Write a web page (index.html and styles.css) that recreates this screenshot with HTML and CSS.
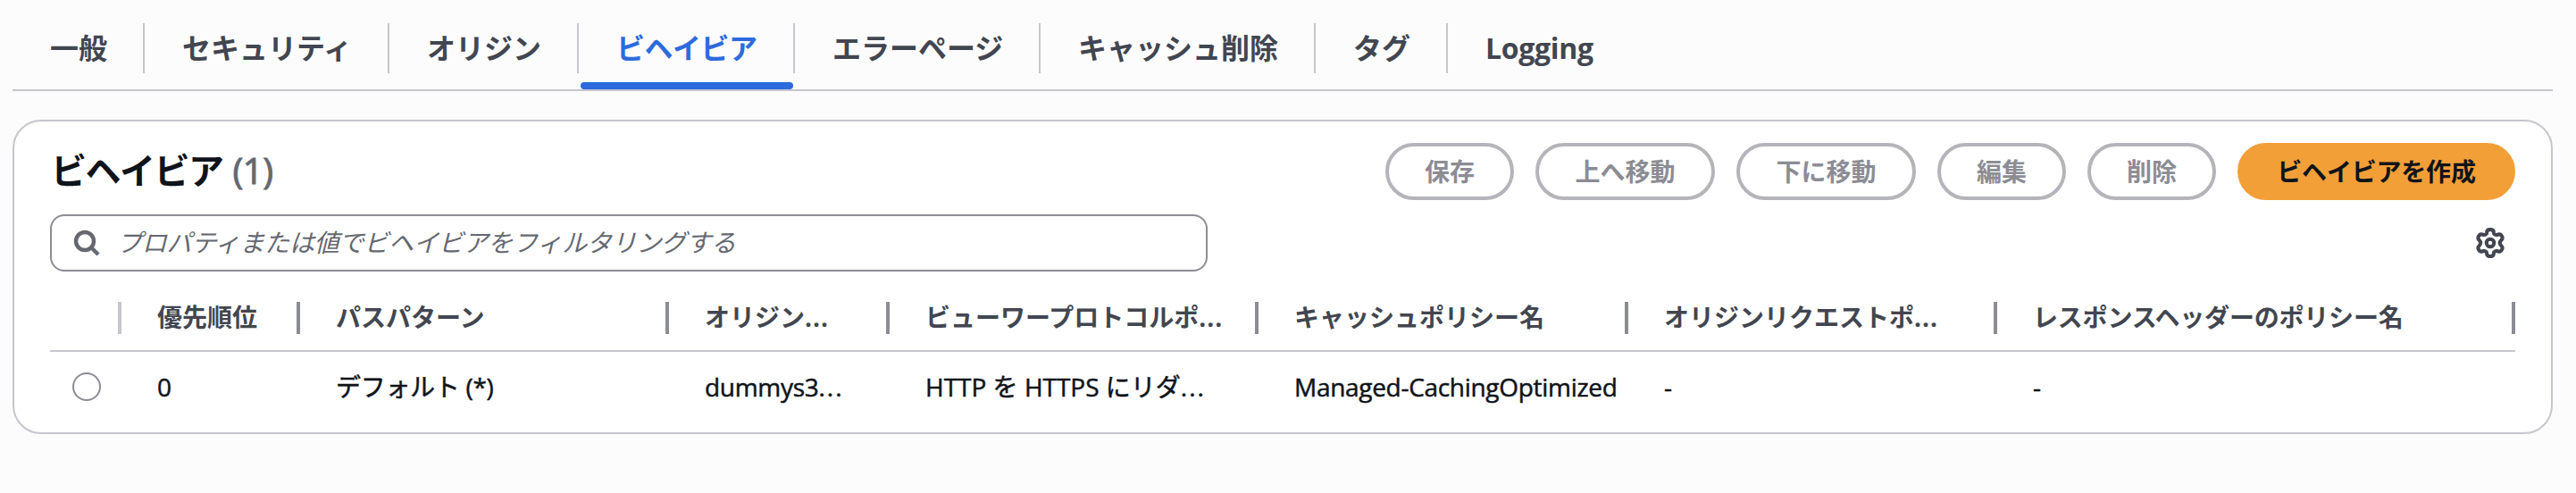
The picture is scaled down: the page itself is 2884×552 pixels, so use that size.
FILE: index.html
```html
<!DOCTYPE html>
<html lang="ja">
<head>
<meta charset="utf-8">
<title>ビヘイビア</title>
<link rel="stylesheet" href="styles.css">
</head>
<body>
<nav class="tabs">
<a class="tab t1"><span>一般</span></a>
<a class="tab t2"><span>セキュリティ</span></a>
<a class="tab t3"><span>オリジン</span></a>
<a class="tab t4 active"><span>ビヘイビア</span></a>
<a class="tab t5"><span>エラーページ</span></a>
<a class="tab t6"><span>キャッシュ削除</span></a>
<a class="tab t7"><span>タグ</span></a>
<a class="tab t8"><span>Logging</span></a>
</nav>
<section class="card">
<header class="head">
<h2 class="title"><span class="name">ビヘイビア</span><span class="count">(1)</span></h2>
<div class="actions">
<button class="btn b2" disabled>保存</button>
<button class="btn b4" disabled>上へ移動</button>
<button class="btn b4" disabled>下に移動</button>
<button class="btn b2" disabled>編集</button>
<button class="btn b2" disabled>削除</button>
<button class="btn primary">ビヘイビアを作成</button>
</div>
</header>
<div class="tools">
<label class="search">
<svg class="search-icon" viewBox="0 0 32 32"><circle cx="14" cy="14" r="10"/><path d="m29 29-8-8"/></svg>
<span class="placeholder">プロパティまたは値でビヘイビアをフィルタリングする</span>
</label>
<svg class="gear" viewBox="0 0 32 32"><path d="M16 1.800c2.300 0 3.500 1.100 3.700 3.200l.2 1.300c.9 1 2 1.500 3.200 1.200l1.200-.4c1.800-.5 3.100.1 4 1.900.9 1.700.6 3-.8 4.200-1.800 1.800-1.800 3.800 0 5.600 1.400 1.200 1.700 2.500.8 4.200-.9 1.800-2.200 2.400-4 1.900l-1.200-.4c-1.200-.3-2.300.2-3.200 1.200l-.2 1.300c-.2 2.100-1.400 3.200-3.700 3.200s-3.500-1.100-3.700-3.200l-.2-1.300c-.9-1-2-1.500-3.200-1.200l-1.200.4c-1.800.5-3.100-.1-4-1.900-.9-1.700-.6-3 .8-4.200 1.800-1.800 1.800-3.800 0-5.600C3.100 12 2.800 10.700 3.700 9c.9-1.800 2.200-2.400 4-1.900l1.200.4c1.200.3 2.300-.2 3.200-1.200l.2-1.300c.2-2.100 1.400-3.200 3.700-3.200Z"/><circle cx="16" cy="16" r="4"/></svg>
</div>
<div class="row header-row">
<div class="cell light"></div>
<div class="cell">優先順位</div>
<div class="cell">パスパターン</div>
<div class="cell">オリジン<span class="dots">...</span></div>
<div class="cell">ビューワープロトコルポ<span class="dots">...</span></div>
<div class="cell">キャッシュポリシー名</div>
<div class="cell">オリジンリクエストポ<span class="dots">...</span></div>
<div class="cell last">レスポンスヘッダーのポリシー名</div>
</div>
<div class="row data-row">
<div class="cell pick"><span class="radio"></span></div>
<div class="cell">0</div>
<div class="cell latin">デフォルト (*)</div>
<div class="cell latin">dummys3<span class="dots wide">...</span></div>
<div class="cell">HTTP を HTTPS にリダ<span class="dots wide">...</span></div>
<div class="cell managed">Managed-CachingOptimized</div>
<div class="cell">-</div>
<div class="cell">-</div>
</div>
</section>
</body>
</html>
```

FILE: styles.css
```css
* { box-sizing: border-box; }
body {
  margin: 0;
  height: 552px;
  padding: 26px 26px 0 14px;
  background: #fcfcfd;
  color: #0f141a;
  font-family: "Open Sans", "Noto Sans CJK JP", sans-serif;
  font-size: 28px;
}
.tabs {
  display: flex;
  height: 76px;
  border-bottom: 2px solid #c6c6cd;
  color: #424650;
  font-size: 32px;
  font-weight: 700;
}
.tab {
  display: flex;
  flex-direction: column;
  justify-content: space-between;
  height: 74px;
  white-space: nowrap;
}
.tab span {
  display: block;
  height: 56px;
  line-height: 56px;
  padding-left: 42px;
  border-right: 2px solid #c6c6cd;
}
.t1 { width: 148px; }
.t2 { width: 274px; }
.t3 { width: 212px; }
.t4 { width: 242px; }
.t5 { width: 275px; }
.t6 { width: 308px; }
.t7 { width: 148px; }
.t8 span { border: 0; letter-spacing: -0.300px; }
.active { color: #2d6bdc; }
.active span { letter-spacing: -0.500px; }
.active::after {
  content: "";
  height: 8px;
  margin: 0 2px;
  border-radius: 4px;
  background: #2d6bdc;
}
.card {
  margin-top: 32px;
  height: 352px;
  padding: 24px 40px 0;
  border: 2px solid #c6c6cd;
  border-radius: 32px;
  background: #fff;
}
.head {
  display: flex;
  justify-content: space-between;
  height: 64px;
}
.title {
  display: flex;
  gap: 11px;
  margin: 0;
  padding-left: 1px;
  font-size: 40px;
  line-height: 62px;
  font-weight: 700;
}
.name { letter-spacing: -1.500px; }
.count {
  color: #656871;
  font-weight: 400;
  letter-spacing: -0.500px;
  -webkit-text-stroke: 1px #656871;
}
.actions { display: flex; gap: 24px; }
.btn {
  height: 64px;
  padding: 0;
  border: 4px solid #b4b4bb;
  border-radius: 32px;
  background: #fff;
  color: #8c8c94;
  font: 700 28px/54px "Open Sans", "Noto Sans CJK JP", sans-serif;
}
.b2 { width: 144px; }
.b4 { width: 201px; }
.primary {
  width: 311px;
  border-color: #f29f38;
  background: #f29f38;
  color: #0f141a;
  letter-spacing: -0.200px;
}
.tools {
  display: flex;
  align-items: center;
  justify-content: space-between;
  margin-top: 16px;
  height: 64px;
}
.search {
  display: flex;
  align-items: center;
  gap: 18px;
  width: 1296px;
  height: 64px;
  padding-left: 23px;
  border: 2px solid #8c8c94;
  border-radius: 16px;
}
.search-icon { width: 32px; height: 32px; fill: none; stroke: #656871; stroke-width: 4.400; }
.placeholder {
  height: 60px;
  color: #656871;
  font-style: italic;
  letter-spacing: -0.200px;
  line-height: 59px;
  white-space: nowrap;
}
.gear {
  width: 34px;
  height: 34px;
  margin-right: 11px;
  fill: none;
  stroke: #424650;
  stroke-width: 3.800;
}
.row {
  display: grid;
  grid-template-columns: 80px 200px 413px 247px 413px 414px 413px 580px;
  white-space: nowrap;
}
.header-row {
  margin-top: 16px;
  height: 74px;
  padding-top: 18px;
  border-bottom: 2px solid #c6c6cd;
  color: #424650;
  font-weight: 700;
}
.cell { padding-left: 40px; line-height: 34px; }
.header-row .cell { height: 36px; border-right: 4px solid #8c8c94; }
.header-row .light { border-right-color: #c6c6cd; }
.header-row .last { letter-spacing: -0.200px; }
.dots { letter-spacing: 1px; }
.wide { letter-spacing: 2px; }
.data-row { padding-top: 22px; -webkit-text-stroke: 0.500px #0f141a; }
.managed, .latin { letter-spacing: -0.300px; }
.pick { padding-left: 25px; padding-top: 1px; }
.radio {
  display: block;
  width: 32px;
  height: 32px;
  border: 2px solid #8c8c94;
  border-radius: 50%;
}
```
